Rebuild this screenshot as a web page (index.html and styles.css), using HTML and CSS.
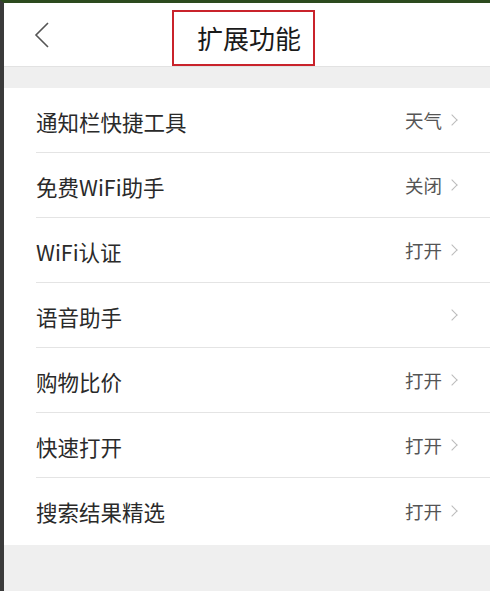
FILE: index.html
```html
<!DOCTYPE html>
<html lang="zh-CN">
<head>
    <meta charset="UTF-8">
    <meta name="viewport" content="width=device-width, initial-scale=1.0">
    <title>扩展功能</title>
    <link rel="stylesheet" href="styles.css">
</head>
<body>
    <div class="screen">
        <header class="topbar">
            <span class="back">
                <svg width="18" height="28" viewBox="0 0 18 28"><path d="M15 2 L3 14 L15 26" fill="none" stroke="#555" stroke-width="1.6"/></svg>
            </span>
            <h1 class="title">扩展功能</h1>
        </header>
        <div class="gap"></div>
        <ul class="list">
            <li class="row"><span class="label">通知栏快捷工具</span><span class="value">天气</span><span class="arrow"></span></li>
            <li class="row"><span class="label">免费WiFi助手</span><span class="value">关闭</span><span class="arrow"></span></li>
            <li class="row"><span class="label">WiFi认证</span><span class="value">打开</span><span class="arrow"></span></li>
            <li class="row"><span class="label">语音助手</span><span class="value"></span><span class="arrow"></span></li>
            <li class="row"><span class="label">购物比价</span><span class="value">打开</span><span class="arrow"></span></li>
            <li class="row"><span class="label">快速打开</span><span class="value">打开</span><span class="arrow"></span></li>
            <li class="row"><span class="label">搜索结果精选</span><span class="value">打开</span><span class="arrow"></span></li>
        </ul>
        <div class="bottom"></div>
    </div>
</body>
</html>
```

FILE: styles.css
```css
body {
    margin: 0;
    padding: 0;
    font-family: "Noto Sans CJK SC", "Noto Sans", sans-serif;
    background-color: #efefef;
}
.screen {
    border-top: 3px solid #2c4a1e;
    border-left: 4px solid #3a3a3a;
    min-height: 588px;
    background-color: #efefef;
    display: flex;
    flex-direction: column;
}
.topbar {
    position: relative;
    height: 63px;
    background-color: #fff;
    border-bottom: 1px solid #e2e2e2;
    display: flex;
    align-items: center;
    justify-content: center;
}
.back {
    position: absolute;
    left: 29px;
    top: 18px;
}
.title {
    margin: 0 0 0 -8px;
    width: 143px;
    height: 56px;
    box-sizing: border-box;
    border: 2.5px solid #c9232b;
    font-size: 26px;
    font-weight: normal;
    color: #1a1a1a;
    display: flex;
    align-items: center;
    justify-content: center;
    padding-left: 12px;
    position: relative;
    top: 3px;
}
.gap {
    height: 21px;
}
.list {
    list-style: none;
    margin: 0;
    padding: 0 0 2px 32px;
    background-color: #fff;
}
.row {
    height: 64px;
    border-bottom: 1px solid #e4e4e4;
    display: flex;
    align-items: center;
    padding-right: 34px;
}
.row:last-child {
    border-bottom: none;
    height: 65px;
}
.label {
    flex: 1;
    font-size: 21.5px;
    color: #2a2a2a;
    padding-top: 2px;
}
.value {
    font-size: 18.5px;
    color: #555;
}
.arrow {
    width: 7px;
    height: 7px;
    border-top: 1.5px solid #bbb;
    border-right: 1.5px solid #bbb;
    transform: rotate(45deg);
    margin-left: 6px;
}
.bottom {
    flex: 1;
}
```
